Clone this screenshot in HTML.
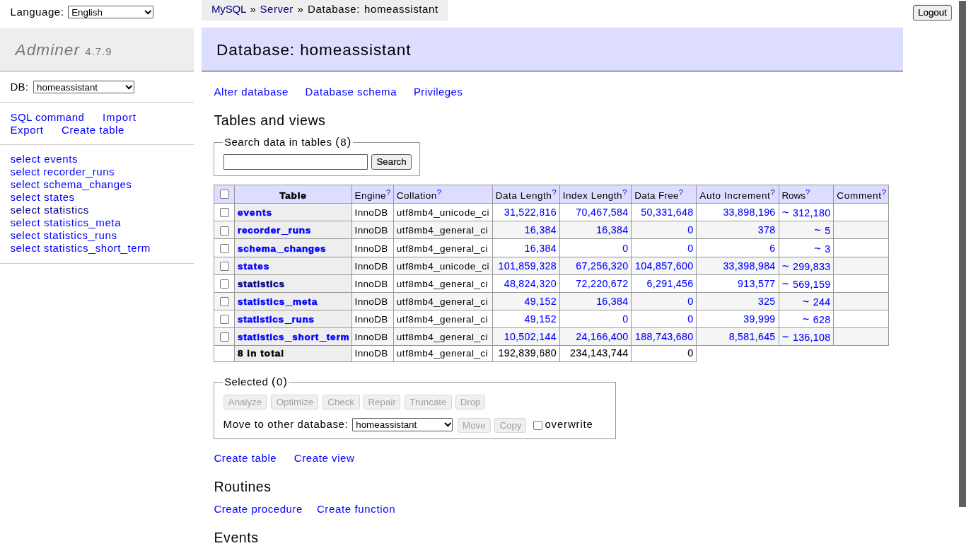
<!DOCTYPE html>
<html><head><meta charset="utf-8"><title>Adminer</title>
<style>
html,body{margin:0;padding:0;background:#fff;overflow:hidden;width:966px;height:543px;}
#wrap{position:absolute;left:0;top:0;width:1366px;height:768px;transform:scale(0.70718);transform-origin:0 0;will-change:transform;
 color:#000;font-family:"Liberation Sans",sans-serif;font-size:15px;}
.t{position:absolute;white-space:pre;}
.box{position:absolute;box-sizing:content-box;}
.hl{position:absolute;height:1px;background:#999;}
.vl{position:absolute;width:1px;background:#999;}
.cb{position:absolute;width:11px;height:11px;border:1px solid #767676;border-radius:2px;background:#fff;}
.sel{position:absolute;box-sizing:border-box;border:1px solid #5a5a5a;border-radius:1px;background:#fff;}
.sel span{position:absolute;left:4px;top:1px;font-size:13.33px;line-height:16px;color:#000;}
.sel i{position:absolute;right:3px;top:50%;width:4.6px;height:4.6px;margin-top:-4.6px;border-right:2.4px solid #000;border-bottom:2.4px solid #000;transform:rotate(45deg);}
.inp{position:absolute;box-sizing:border-box;border:1px solid #5a5a5a;border-radius:1px;background:#fff;}
.btn{position:absolute;box-sizing:border-box;border:1px solid #5a5a5a;border-radius:3px;background:#efefef;font-size:13.33px;line-height:19px;text-align:center;color:#000;-webkit-text-stroke:0.15px;}
.btn.dis{border-color:#d6d6d6;color:#a3a3a3;background:#f0f0f0;-webkit-text-stroke:0;}
#sb{position:absolute;left:959px;top:1px;width:7px;height:506px;background:#5f5f5f;}
</style></head>
<body>
<div id="wrap">
<div class="t" style="left:14.49px;top:7.48px;line-height:20px;"><span style="font-size:15.05px;letter-spacing:0.532px;word-spacing:0.000px;">Language:</span></div>
<div class="sel" style="left:96.2px;top:7.5px;width:120.9px;height:18.5px;"><span>English</span><i></i></div>
<div class="box" style="left:0;top:39.6px;width:274px;height:60.7px;background:#eee;border-bottom:1px solid #999"></div>
<div class="t" style="left:21.60px;top:55.63px;line-height:30px;"><span style="font-size:22.57px;letter-spacing:1.048px;word-spacing:0.000px;font-style:italic;color:#777;">Adminer</span><span style="font-size:22.57px;letter-spacing:0.595px;word-spacing:0.000px;letter-spacing:1.1px"> </span><span style="font-size:15.12px;letter-spacing:0.637px;word-spacing:0.000px;color:#777;letter-spacing:0.95px">4.7.9</span></div>
<div class="box" style="left:0;top:144.3px;width:274px;height:0;border-bottom:1px solid #ccc"></div>
<div class="box" style="left:0;top:203.7px;width:274px;height:0;border-bottom:1px solid #ccc"></div>
<div class="box" style="left:0;top:372px;width:274px;height:0;border-bottom:1px solid #ccc"></div>
<div class="t" style="left:14.40px;top:113.40px;line-height:20px;"><span style="font-size:15.05px;letter-spacing:0.245px;word-spacing:0.000px;">DB:</span></div>
<div class="sel" style="left:47.1px;top:113.5px;width:142.7px;height:18.9px;"><span>homeassistant</span><i></i></div>
<div class="t" style="left:14.40px;top:155.54px;line-height:20px;"><span style="font-size:15.05px;letter-spacing:0.468px;word-spacing:0.000px;color:blue;">SQL command</span></div>
<div class="t" style="left:145.00px;top:155.54px;line-height:20px;"><span style="font-size:15.05px;letter-spacing:0.858px;word-spacing:0.000px;color:blue;">Import</span></div>
<div class="t" style="left:14.40px;top:173.78px;line-height:20px;"><span style="font-size:15.05px;letter-spacing:0.608px;word-spacing:0.000px;color:blue;">Export</span></div>
<div class="t" style="left:87.10px;top:173.78px;line-height:20px;"><span style="font-size:15.05px;letter-spacing:0.577px;word-spacing:0.000px;color:blue;">Create table</span></div>
<div class="t" style="left:14.40px;top:215.49px;line-height:20px;"><span style="font-size:15.05px;letter-spacing:0.619px;word-spacing:0.000px;color:blue;">select events</span></div>
<div class="t" style="left:14.40px;top:233.49px;line-height:20px;"><span style="font-size:15.05px;letter-spacing:0.493px;word-spacing:0.000px;color:blue;">select recorder<span style="display:inline-block;transform:scaleX(1.2);transform-origin:0 0;margin-left:-0.6px;letter-spacing:1.693px">_</span>runs</span></div>
<div class="t" style="left:14.40px;top:251.49px;line-height:20px;"><span style="font-size:15.05px;letter-spacing:0.470px;word-spacing:0.000px;color:blue;">select schema<span style="display:inline-block;transform:scaleX(1.2);transform-origin:0 0;margin-left:-0.6px;letter-spacing:1.670px">_</span>changes</span></div>
<div class="t" style="left:14.40px;top:269.49px;line-height:20px;"><span style="font-size:15.05px;letter-spacing:0.593px;word-spacing:0.000px;color:blue;">select states</span></div>
<div class="t" style="left:14.40px;top:287.49px;line-height:20px;"><span style="font-size:15.05px;letter-spacing:0.610px;word-spacing:0.000px;color:navy;">select statistics</span></div>
<div class="t" style="left:14.40px;top:305.49px;line-height:20px;"><span style="font-size:15.05px;letter-spacing:0.595px;word-spacing:0.000px;color:blue;">select statistics<span style="display:inline-block;transform:scaleX(1.2);transform-origin:0 0;margin-left:-0.6px;letter-spacing:1.795px">_</span>meta</span></div>
<div class="t" style="left:14.40px;top:323.49px;line-height:20px;"><span style="font-size:15.05px;letter-spacing:0.527px;word-spacing:0.000px;color:blue;">select statistics<span style="display:inline-block;transform:scaleX(1.2);transform-origin:0 0;margin-left:-0.6px;letter-spacing:1.727px">_</span>runs</span></div>
<div class="t" style="left:14.40px;top:341.49px;line-height:20px;"><span style="font-size:15.05px;letter-spacing:0.560px;word-spacing:0.000px;color:blue;">select statistics<span style="display:inline-block;transform:scaleX(1.2);transform-origin:0 0;margin-left:-0.6px;letter-spacing:1.760px">_</span>short<span style="display:inline-block;transform:scaleX(1.2);transform-origin:0 0;margin-left:-0.6px;letter-spacing:1.760px">_</span>term</span></div>
<div class="box" style="left:284.5px;top:0;width:348.7px;height:28.6px;background:#eee"></div>
<div class="t" style="left:298.90px;top:3.38px;line-height:20px;"><span style="font-size:15.05px;letter-spacing:-0.145px;word-spacing:0.000px;color:navy;">MySQL</span><span style="font-size:15.05px;letter-spacing:0.411px;word-spacing:0.000px;word-spacing:0.6px"> » </span><span style="font-size:15.05px;letter-spacing:0.483px;word-spacing:0.000px;color:navy;">Server</span><span style="font-size:15.05px;letter-spacing:0.411px;word-spacing:0.000px;word-spacing:1.2px"> » </span><span style="font-size:15.05px;letter-spacing:0.597px;word-spacing:0.000px;word-spacing:1.2px">Database: homeassistant</span></div>
<div class="box" style="left:284.5px;top:39.2px;width:992.3px;height:60.6px;background:#ddf;border-bottom:1px solid #333"></div>
<div class="t" style="left:306.10px;top:55.77px;line-height:30px;"><span style="font-size:22.57px;letter-spacing:0.896px;word-spacing:0.000px;">Database: homeassistant</span></div>
<div class="t" style="left:302.40px;top:120.04px;line-height:20px;"><span style="font-size:15.05px;letter-spacing:0.613px;word-spacing:0.000px;color:blue;">Alter database</span></div>
<div class="t" style="left:431.59px;top:120.04px;line-height:20px;"><span style="font-size:15.05px;letter-spacing:0.550px;word-spacing:0.000px;color:blue;">Database schema</span></div>
<div class="t" style="left:584.92px;top:120.04px;line-height:20px;"><span style="font-size:15.05px;letter-spacing:0.400px;word-spacing:0.000px;color:blue;">Privileges</span></div>
<div class="t" style="left:302.40px;top:157.33px;line-height:26px;"><span style="font-size:19.56px;letter-spacing:0.573px;word-spacing:0.000px;">Tables and views</span></div>
<div class="box" style="left:301.7px;top:200.6px;width:290.3px;height:46.1px;border:1px solid #999"></div>
<div class="box" style="left:314.6px;top:195px;width:184.7px;height:12px;background:#fff"></div>
<div class="t" style="left:316.90px;top:190.75px;line-height:20px;"><span style="font-size:15.05px;letter-spacing:0.535px;word-spacing:0.000px;">Search data in tables </span><span style="font-size:16.56px;letter-spacing:0.103px;word-spacing:0.000px;letter-spacing:1.5px">(</span><span style="font-size:15.05px;letter-spacing:0.793px;word-spacing:0.000px;letter-spacing:1.2px">8</span><span style="font-size:16.56px;letter-spacing:0.103px;word-spacing:0.000px;">)</span></div>
<div class="inp" style="left:315.9px;top:218.3px;width:203.8px;height:22px"></div>
<div class="btn" style="left:525.2px;top:218.3px;width:56.8px;height:21.5px">Search</div>
<div class="box" style="left:302.20px;top:261.00px;width:954.10px;height:26.60px;background:#ddf"></div>
<div class="box" style="left:331.60px;top:287.60px;width:165.60px;height:25.14px;background:#eee"></div>
<div class="box" style="left:302.20px;top:312.74px;width:954.10px;height:25.14px;background:#f5f5f5"></div>
<div class="box" style="left:331.60px;top:312.74px;width:165.60px;height:25.14px;background:#eee"></div>
<div class="box" style="left:331.60px;top:337.88px;width:165.60px;height:25.14px;background:#eee"></div>
<div class="box" style="left:302.20px;top:363.02px;width:954.10px;height:25.14px;background:#f5f5f5"></div>
<div class="box" style="left:331.60px;top:363.02px;width:165.60px;height:25.14px;background:#eee"></div>
<div class="box" style="left:331.60px;top:388.16px;width:165.60px;height:25.14px;background:#eee"></div>
<div class="box" style="left:302.20px;top:413.30px;width:954.10px;height:25.14px;background:#f5f5f5"></div>
<div class="box" style="left:331.60px;top:413.30px;width:165.60px;height:25.14px;background:#eee"></div>
<div class="box" style="left:331.60px;top:438.44px;width:165.60px;height:25.14px;background:#eee"></div>
<div class="box" style="left:302.20px;top:463.58px;width:954.10px;height:25.14px;background:#f5f5f5"></div>
<div class="box" style="left:331.60px;top:463.58px;width:165.60px;height:25.14px;background:#eee"></div>
<div class="box" style="left:331.60px;top:488.72px;width:165.60px;height:22.28px;background:#eee"></div>
<div class="hl" style="left:301.70px;top:260.50px;width:955.10px"></div>
<div class="hl" style="left:301.70px;top:287.10px;width:955.10px"></div>
<div class="hl" style="left:301.70px;top:312.24px;width:955.10px"></div>
<div class="hl" style="left:301.70px;top:337.38px;width:955.10px"></div>
<div class="hl" style="left:301.70px;top:362.52px;width:955.10px"></div>
<div class="hl" style="left:301.70px;top:387.66px;width:955.10px"></div>
<div class="hl" style="left:301.70px;top:412.80px;width:955.10px"></div>
<div class="hl" style="left:301.70px;top:437.94px;width:955.10px"></div>
<div class="hl" style="left:301.70px;top:463.08px;width:955.10px"></div>
<div class="hl" style="left:301.70px;top:488.22px;width:955.10px"></div>
<div class="hl" style="left:301.70px;top:510.50px;width:683.70px"></div>
<div class="vl" style="left:301.70px;top:260.50px;height:251.00px"></div>
<div class="vl" style="left:331.10px;top:260.50px;height:251.00px"></div>
<div class="vl" style="left:496.70px;top:260.50px;height:251.00px"></div>
<div class="vl" style="left:555.90px;top:260.50px;height:251.00px"></div>
<div class="vl" style="left:695.80px;top:260.50px;height:251.00px"></div>
<div class="vl" style="left:790.80px;top:260.50px;height:251.00px"></div>
<div class="vl" style="left:892.40px;top:260.50px;height:251.00px"></div>
<div class="vl" style="left:984.40px;top:260.50px;height:251.00px"></div>
<div class="vl" style="left:1100.50px;top:260.50px;height:228.72px"></div>
<div class="vl" style="left:1178.40px;top:260.50px;height:228.72px"></div>
<div class="vl" style="left:1255.80px;top:260.50px;height:228.72px"></div>
<div class="cb" style="left:311.40px;top:267.80px"></div>
<div class="t" style="left:395.19px;top:267.12px;line-height:18px;"><span style="font-size:13.54px;letter-spacing:0.811px;word-spacing:0.000px;font-weight:bold;-webkit-text-stroke:0.55px;">Table</span></div>
<div class="t" style="left:501.59px;top:267.12px;line-height:18px;"><span style="font-size:13.54px;letter-spacing:0.374px;word-spacing:0.000px;">Engine</span><span style="font-size:11.24px;letter-spacing:-0.542px;word-spacing:0.000px;color:blue;position:relative;top:-5.5px;">?</span></div>
<div class="t" style="left:560.79px;top:267.12px;line-height:18px;"><span style="font-size:13.54px;letter-spacing:0.472px;word-spacing:0.000px;">Collation</span><span style="font-size:11.24px;letter-spacing:-0.542px;word-spacing:0.000px;color:blue;position:relative;top:-5.5px;">?</span></div>
<div class="t" style="left:700.69px;top:267.12px;line-height:18px;"><span style="font-size:13.54px;letter-spacing:0.543px;word-spacing:0.000px;">Data Length</span><span style="font-size:11.24px;letter-spacing:-0.542px;word-spacing:0.000px;color:blue;position:relative;top:-5.5px;">?</span></div>
<div class="t" style="left:795.69px;top:267.12px;line-height:18px;"><span style="font-size:13.54px;letter-spacing:0.515px;word-spacing:0.000px;">Index Length</span><span style="font-size:11.24px;letter-spacing:-0.542px;word-spacing:0.000px;color:blue;position:relative;top:-5.5px;">?</span></div>
<div class="t" style="left:897.29px;top:267.12px;line-height:18px;"><span style="font-size:13.54px;letter-spacing:0.261px;word-spacing:0.000px;">Data Free</span><span style="font-size:11.24px;letter-spacing:-0.542px;word-spacing:0.000px;color:blue;position:relative;top:-5.5px;">?</span></div>
<div class="t" style="left:989.29px;top:267.12px;line-height:18px;"><span style="font-size:13.54px;letter-spacing:0.603px;word-spacing:0.000px;">Auto Increment</span><span style="font-size:11.24px;letter-spacing:-0.542px;word-spacing:0.000px;color:blue;position:relative;top:-5.5px;">?</span></div>
<div class="t" style="left:1105.39px;top:267.12px;line-height:18px;"><span style="font-size:13.54px;letter-spacing:-0.040px;word-spacing:0.000px;">Rows</span><span style="font-size:11.24px;letter-spacing:-0.542px;word-spacing:0.000px;color:blue;position:relative;top:-5.5px;">?</span></div>
<div class="t" style="left:1183.29px;top:267.12px;line-height:18px;"><span style="font-size:13.54px;letter-spacing:0.685px;word-spacing:0.000px;">Comment</span><span style="font-size:11.24px;letter-spacing:-0.542px;word-spacing:0.000px;color:blue;position:relative;top:-5.5px;">?</span></div>
<div class="cb" style="left:311.40px;top:294.40px"></div>
<div class="t" style="left:335.99px;top:291.30px;line-height:18px;"><span style="font-size:13.54px;letter-spacing:1.042px;word-spacing:0.000px;font-weight:bold;-webkit-text-stroke:0.55px;color:blue;">events</span></div>
<div class="t" style="left:501.59px;top:291.30px;line-height:18px;"><span style="font-size:13.54px;letter-spacing:0.313px;word-spacing:0.000px;">InnoDB</span></div>
<div class="t" style="left:560.79px;top:291.30px;line-height:18px;"><span style="font-size:13.54px;letter-spacing:0.497px;word-spacing:0.000px;">utf8mb4<span style="display:inline-block;transform:scaleX(1.2);transform-origin:0 0;margin-left:-0.6px;letter-spacing:1.697px">_</span>unicode<span style="display:inline-block;transform:scaleX(1.2);transform-origin:0 0;margin-left:-0.6px;letter-spacing:1.697px">_</span>ci</span></div>
<div class="t" style="left:712.71px;top:291.30px;line-height:18px;"><span style="font-size:14.26px;letter-spacing:0.285px;word-spacing:0.000px;color:blue;-webkit-text-stroke:0.08px;">31,522,816</span></div>
<div class="t" style="left:814.31px;top:291.30px;line-height:18px;"><span style="font-size:14.26px;letter-spacing:0.285px;word-spacing:0.000px;color:blue;-webkit-text-stroke:0.08px;">70,467,584</span></div>
<div class="t" style="left:906.31px;top:291.30px;line-height:18px;"><span style="font-size:14.26px;letter-spacing:0.285px;word-spacing:0.000px;color:blue;-webkit-text-stroke:0.08px;">50,331,648</span></div>
<div class="t" style="left:1022.41px;top:291.30px;line-height:18px;"><span style="font-size:14.26px;letter-spacing:0.285px;word-spacing:0.000px;color:blue;-webkit-text-stroke:0.08px;">33,898,196</span></div>
<div class="t" style="left:1105.94px;top:291.30px;line-height:18px;"><span style="font-size:16.20px;letter-spacing:1.399px;word-spacing:0.000px;color:blue;-webkit-text-stroke:0.15px;">~</span><span style="font-size:13.54px;letter-spacing:0.357px;word-spacing:0.000px;"> </span><span style="font-size:14.26px;letter-spacing:0.294px;word-spacing:0.000px;color:blue;-webkit-text-stroke:0.08px;">312,180</span></div>
<div class="cb" style="left:311.40px;top:319.54px"></div>
<div class="t" style="left:335.99px;top:316.44px;line-height:18px;"><span style="font-size:13.54px;letter-spacing:0.756px;word-spacing:0.000px;font-weight:bold;-webkit-text-stroke:0.55px;color:blue;">recorder<span style="display:inline-block;transform:scaleX(1.22);transform-origin:0 0;margin-left:0.9px;letter-spacing:2.400px">_</span>runs</span></div>
<div class="t" style="left:501.59px;top:316.44px;line-height:18px;"><span style="font-size:13.54px;letter-spacing:0.313px;word-spacing:0.000px;">InnoDB</span></div>
<div class="t" style="left:560.79px;top:316.44px;line-height:18px;"><span style="font-size:13.54px;letter-spacing:0.510px;word-spacing:0.000px;">utf8mb4<span style="display:inline-block;transform:scaleX(1.2);transform-origin:0 0;margin-left:-0.6px;letter-spacing:1.710px">_</span>general<span style="display:inline-block;transform:scaleX(1.2);transform-origin:0 0;margin-left:-0.6px;letter-spacing:1.710px">_</span>ci</span></div>
<div class="t" style="left:741.56px;top:316.44px;line-height:18px;"><span style="font-size:14.26px;letter-spacing:0.291px;word-spacing:0.000px;color:blue;-webkit-text-stroke:0.08px;">16,384</span></div>
<div class="t" style="left:843.16px;top:316.44px;line-height:18px;"><span style="font-size:14.26px;letter-spacing:0.291px;word-spacing:0.000px;color:blue;-webkit-text-stroke:0.08px;">16,384</span></div>
<div class="t" style="left:972.26px;top:316.44px;line-height:18px;"><span style="font-size:14.26px;letter-spacing:0.317px;word-spacing:0.000px;color:blue;-webkit-text-stroke:0.08px;">0</span></div>
<div class="t" style="left:1071.87px;top:316.44px;line-height:18px;"><span style="font-size:14.26px;letter-spacing:0.317px;word-spacing:0.000px;color:blue;-webkit-text-stroke:0.08px;">378</span></div>
<div class="t" style="left:1151.29px;top:316.44px;line-height:18px;"><span style="font-size:16.20px;letter-spacing:1.399px;word-spacing:0.000px;color:blue;-webkit-text-stroke:0.15px;">~</span><span style="font-size:13.54px;letter-spacing:0.357px;word-spacing:0.000px;"> </span><span style="font-size:14.26px;letter-spacing:0.317px;word-spacing:0.000px;color:blue;-webkit-text-stroke:0.08px;">5</span></div>
<div class="cb" style="left:311.40px;top:344.68px"></div>
<div class="t" style="left:335.99px;top:341.58px;line-height:18px;"><span style="font-size:13.54px;letter-spacing:0.706px;word-spacing:0.000px;font-weight:bold;-webkit-text-stroke:0.55px;color:blue;">schema<span style="display:inline-block;transform:scaleX(1.22);transform-origin:0 0;margin-left:0.9px;letter-spacing:2.400px">_</span>changes</span></div>
<div class="t" style="left:501.59px;top:341.58px;line-height:18px;"><span style="font-size:13.54px;letter-spacing:0.313px;word-spacing:0.000px;">InnoDB</span></div>
<div class="t" style="left:560.79px;top:341.58px;line-height:18px;"><span style="font-size:13.54px;letter-spacing:0.510px;word-spacing:0.000px;">utf8mb4<span style="display:inline-block;transform:scaleX(1.2);transform-origin:0 0;margin-left:-0.6px;letter-spacing:1.710px">_</span>general<span style="display:inline-block;transform:scaleX(1.2);transform-origin:0 0;margin-left:-0.6px;letter-spacing:1.710px">_</span>ci</span></div>
<div class="t" style="left:741.56px;top:341.58px;line-height:18px;"><span style="font-size:14.26px;letter-spacing:0.291px;word-spacing:0.000px;color:blue;-webkit-text-stroke:0.08px;">16,384</span></div>
<div class="t" style="left:880.26px;top:341.58px;line-height:18px;"><span style="font-size:14.26px;letter-spacing:0.317px;word-spacing:0.000px;color:blue;-webkit-text-stroke:0.08px;">0</span></div>
<div class="t" style="left:972.26px;top:341.58px;line-height:18px;"><span style="font-size:14.26px;letter-spacing:0.317px;word-spacing:0.000px;color:blue;-webkit-text-stroke:0.08px;">0</span></div>
<div class="t" style="left:1088.36px;top:341.58px;line-height:18px;"><span style="font-size:14.26px;letter-spacing:0.317px;word-spacing:0.000px;color:blue;-webkit-text-stroke:0.08px;">6</span></div>
<div class="t" style="left:1151.29px;top:341.58px;line-height:18px;"><span style="font-size:16.20px;letter-spacing:1.399px;word-spacing:0.000px;color:blue;-webkit-text-stroke:0.15px;">~</span><span style="font-size:13.54px;letter-spacing:0.357px;word-spacing:0.000px;"> </span><span style="font-size:14.26px;letter-spacing:0.317px;word-spacing:0.000px;color:blue;-webkit-text-stroke:0.08px;">3</span></div>
<div class="cb" style="left:311.40px;top:369.82px"></div>
<div class="t" style="left:335.99px;top:366.72px;line-height:18px;"><span style="font-size:13.54px;letter-spacing:1.034px;word-spacing:0.000px;font-weight:bold;-webkit-text-stroke:0.55px;color:blue;">states</span></div>
<div class="t" style="left:501.59px;top:366.72px;line-height:18px;"><span style="font-size:13.54px;letter-spacing:0.313px;word-spacing:0.000px;">InnoDB</span></div>
<div class="t" style="left:560.79px;top:366.72px;line-height:18px;"><span style="font-size:13.54px;letter-spacing:0.497px;word-spacing:0.000px;">utf8mb4<span style="display:inline-block;transform:scaleX(1.2);transform-origin:0 0;margin-left:-0.6px;letter-spacing:1.697px">_</span>unicode<span style="display:inline-block;transform:scaleX(1.2);transform-origin:0 0;margin-left:-0.6px;letter-spacing:1.697px">_</span>ci</span></div>
<div class="t" style="left:704.46px;top:366.72px;line-height:18px;"><span style="font-size:14.26px;letter-spacing:0.288px;word-spacing:0.000px;color:blue;-webkit-text-stroke:0.08px;">101,859,328</span></div>
<div class="t" style="left:814.31px;top:366.72px;line-height:18px;"><span style="font-size:14.26px;letter-spacing:0.285px;word-spacing:0.000px;color:blue;-webkit-text-stroke:0.08px;">67,256,320</span></div>
<div class="t" style="left:898.06px;top:366.72px;line-height:18px;"><span style="font-size:14.26px;letter-spacing:0.288px;word-spacing:0.000px;color:blue;-webkit-text-stroke:0.08px;">104,857,600</span></div>
<div class="t" style="left:1022.41px;top:366.72px;line-height:18px;"><span style="font-size:14.26px;letter-spacing:0.285px;word-spacing:0.000px;color:blue;-webkit-text-stroke:0.08px;">33,398,984</span></div>
<div class="t" style="left:1105.94px;top:366.72px;line-height:18px;"><span style="font-size:16.20px;letter-spacing:1.399px;word-spacing:0.000px;color:blue;-webkit-text-stroke:0.15px;">~</span><span style="font-size:13.54px;letter-spacing:0.357px;word-spacing:0.000px;"> </span><span style="font-size:14.26px;letter-spacing:0.294px;word-spacing:0.000px;color:blue;-webkit-text-stroke:0.08px;">299,833</span></div>
<div class="cb" style="left:311.40px;top:394.96px"></div>
<div class="t" style="left:335.99px;top:391.86px;line-height:18px;"><span style="font-size:13.54px;letter-spacing:0.832px;word-spacing:0.000px;font-weight:bold;-webkit-text-stroke:0.55px;color:navy;">statistics</span></div>
<div class="t" style="left:501.59px;top:391.86px;line-height:18px;"><span style="font-size:13.54px;letter-spacing:0.313px;word-spacing:0.000px;">InnoDB</span></div>
<div class="t" style="left:560.79px;top:391.86px;line-height:18px;"><span style="font-size:13.54px;letter-spacing:0.510px;word-spacing:0.000px;">utf8mb4<span style="display:inline-block;transform:scaleX(1.2);transform-origin:0 0;margin-left:-0.6px;letter-spacing:1.710px">_</span>general<span style="display:inline-block;transform:scaleX(1.2);transform-origin:0 0;margin-left:-0.6px;letter-spacing:1.710px">_</span>ci</span></div>
<div class="t" style="left:712.71px;top:391.86px;line-height:18px;"><span style="font-size:14.26px;letter-spacing:0.285px;word-spacing:0.000px;color:blue;-webkit-text-stroke:0.08px;">48,824,320</span></div>
<div class="t" style="left:814.31px;top:391.86px;line-height:18px;"><span style="font-size:14.26px;letter-spacing:0.285px;word-spacing:0.000px;color:blue;-webkit-text-stroke:0.08px;">72,220,672</span></div>
<div class="t" style="left:914.55px;top:391.86px;line-height:18px;"><span style="font-size:14.26px;letter-spacing:0.282px;word-spacing:0.000px;color:blue;-webkit-text-stroke:0.08px;">6,291,456</span></div>
<div class="t" style="left:1043.02px;top:391.86px;line-height:18px;"><span style="font-size:14.26px;letter-spacing:0.294px;word-spacing:0.000px;color:blue;-webkit-text-stroke:0.08px;">913,577</span></div>
<div class="t" style="left:1105.94px;top:391.86px;line-height:18px;"><span style="font-size:16.20px;letter-spacing:1.399px;word-spacing:0.000px;color:blue;-webkit-text-stroke:0.15px;">~</span><span style="font-size:13.54px;letter-spacing:0.357px;word-spacing:0.000px;"> </span><span style="font-size:14.26px;letter-spacing:0.294px;word-spacing:0.000px;color:blue;-webkit-text-stroke:0.08px;">569,159</span></div>
<div class="cb" style="left:311.40px;top:420.10px"></div>
<div class="t" style="left:335.99px;top:417.00px;line-height:18px;"><span style="font-size:13.54px;letter-spacing:0.859px;word-spacing:0.000px;font-weight:bold;-webkit-text-stroke:0.55px;color:blue;">statistics<span style="display:inline-block;transform:scaleX(1.22);transform-origin:0 0;margin-left:0.9px;letter-spacing:2.400px">_</span>meta</span></div>
<div class="t" style="left:501.59px;top:417.00px;line-height:18px;"><span style="font-size:13.54px;letter-spacing:0.313px;word-spacing:0.000px;">InnoDB</span></div>
<div class="t" style="left:560.79px;top:417.00px;line-height:18px;"><span style="font-size:13.54px;letter-spacing:0.510px;word-spacing:0.000px;">utf8mb4<span style="display:inline-block;transform:scaleX(1.2);transform-origin:0 0;margin-left:-0.6px;letter-spacing:1.710px">_</span>general<span style="display:inline-block;transform:scaleX(1.2);transform-origin:0 0;margin-left:-0.6px;letter-spacing:1.710px">_</span>ci</span></div>
<div class="t" style="left:741.56px;top:417.00px;line-height:18px;"><span style="font-size:14.26px;letter-spacing:0.291px;word-spacing:0.000px;color:blue;-webkit-text-stroke:0.08px;">49,152</span></div>
<div class="t" style="left:843.16px;top:417.00px;line-height:18px;"><span style="font-size:14.26px;letter-spacing:0.291px;word-spacing:0.000px;color:blue;-webkit-text-stroke:0.08px;">16,384</span></div>
<div class="t" style="left:972.26px;top:417.00px;line-height:18px;"><span style="font-size:14.26px;letter-spacing:0.317px;word-spacing:0.000px;color:blue;-webkit-text-stroke:0.08px;">0</span></div>
<div class="t" style="left:1071.87px;top:417.00px;line-height:18px;"><span style="font-size:14.26px;letter-spacing:0.317px;word-spacing:0.000px;color:blue;-webkit-text-stroke:0.08px;">325</span></div>
<div class="t" style="left:1134.79px;top:417.00px;line-height:18px;"><span style="font-size:16.20px;letter-spacing:1.399px;word-spacing:0.000px;color:blue;-webkit-text-stroke:0.15px;">~</span><span style="font-size:13.54px;letter-spacing:0.357px;word-spacing:0.000px;"> </span><span style="font-size:14.26px;letter-spacing:0.317px;word-spacing:0.000px;color:blue;-webkit-text-stroke:0.08px;">244</span></div>
<div class="cb" style="left:311.40px;top:445.24px"></div>
<div class="t" style="left:335.99px;top:442.14px;line-height:18px;"><span style="font-size:13.54px;letter-spacing:0.699px;word-spacing:0.000px;font-weight:bold;-webkit-text-stroke:0.55px;color:blue;">statistics<span style="display:inline-block;transform:scaleX(1.22);transform-origin:0 0;margin-left:0.9px;letter-spacing:2.400px">_</span>runs</span></div>
<div class="t" style="left:501.59px;top:442.14px;line-height:18px;"><span style="font-size:13.54px;letter-spacing:0.313px;word-spacing:0.000px;">InnoDB</span></div>
<div class="t" style="left:560.79px;top:442.14px;line-height:18px;"><span style="font-size:13.54px;letter-spacing:0.510px;word-spacing:0.000px;">utf8mb4<span style="display:inline-block;transform:scaleX(1.2);transform-origin:0 0;margin-left:-0.6px;letter-spacing:1.710px">_</span>general<span style="display:inline-block;transform:scaleX(1.2);transform-origin:0 0;margin-left:-0.6px;letter-spacing:1.710px">_</span>ci</span></div>
<div class="t" style="left:741.56px;top:442.14px;line-height:18px;"><span style="font-size:14.26px;letter-spacing:0.291px;word-spacing:0.000px;color:blue;-webkit-text-stroke:0.08px;">49,152</span></div>
<div class="t" style="left:880.26px;top:442.14px;line-height:18px;"><span style="font-size:14.26px;letter-spacing:0.317px;word-spacing:0.000px;color:blue;-webkit-text-stroke:0.08px;">0</span></div>
<div class="t" style="left:972.26px;top:442.14px;line-height:18px;"><span style="font-size:14.26px;letter-spacing:0.317px;word-spacing:0.000px;color:blue;-webkit-text-stroke:0.08px;">0</span></div>
<div class="t" style="left:1051.26px;top:442.14px;line-height:18px;"><span style="font-size:14.26px;letter-spacing:0.291px;word-spacing:0.000px;color:blue;-webkit-text-stroke:0.08px;">39,999</span></div>
<div class="t" style="left:1134.79px;top:442.14px;line-height:18px;"><span style="font-size:16.20px;letter-spacing:1.399px;word-spacing:0.000px;color:blue;-webkit-text-stroke:0.15px;">~</span><span style="font-size:13.54px;letter-spacing:0.357px;word-spacing:0.000px;"> </span><span style="font-size:14.26px;letter-spacing:0.317px;word-spacing:0.000px;color:blue;-webkit-text-stroke:0.08px;">628</span></div>
<div class="cb" style="left:311.40px;top:470.38px"></div>
<div class="t" style="left:335.99px;top:467.28px;line-height:18px;"><span style="font-size:13.54px;letter-spacing:0.777px;word-spacing:0.000px;font-weight:bold;-webkit-text-stroke:0.55px;color:blue;">statistics<span style="display:inline-block;transform:scaleX(1.22);transform-origin:0 0;margin-left:0.9px;letter-spacing:2.400px">_</span>short<span style="display:inline-block;transform:scaleX(1.22);transform-origin:0 0;margin-left:0.9px;letter-spacing:2.400px">_</span>term</span></div>
<div class="t" style="left:501.59px;top:467.28px;line-height:18px;"><span style="font-size:13.54px;letter-spacing:0.313px;word-spacing:0.000px;">InnoDB</span></div>
<div class="t" style="left:560.79px;top:467.28px;line-height:18px;"><span style="font-size:13.54px;letter-spacing:0.510px;word-spacing:0.000px;">utf8mb4<span style="display:inline-block;transform:scaleX(1.2);transform-origin:0 0;margin-left:-0.6px;letter-spacing:1.710px">_</span>general<span style="display:inline-block;transform:scaleX(1.2);transform-origin:0 0;margin-left:-0.6px;letter-spacing:1.710px">_</span>ci</span></div>
<div class="t" style="left:712.71px;top:467.28px;line-height:18px;"><span style="font-size:14.26px;letter-spacing:0.285px;word-spacing:0.000px;color:blue;-webkit-text-stroke:0.08px;">10,502,144</span></div>
<div class="t" style="left:814.31px;top:467.28px;line-height:18px;"><span style="font-size:14.26px;letter-spacing:0.285px;word-spacing:0.000px;color:blue;-webkit-text-stroke:0.08px;">24,166,400</span></div>
<div class="t" style="left:898.06px;top:467.28px;line-height:18px;"><span style="font-size:14.26px;letter-spacing:0.288px;word-spacing:0.000px;color:blue;-webkit-text-stroke:0.08px;">188,743,680</span></div>
<div class="t" style="left:1030.65px;top:467.28px;line-height:18px;"><span style="font-size:14.26px;letter-spacing:0.282px;word-spacing:0.000px;color:blue;-webkit-text-stroke:0.08px;">8,581,645</span></div>
<div class="t" style="left:1105.94px;top:467.28px;line-height:18px;"><span style="font-size:16.20px;letter-spacing:1.399px;word-spacing:0.000px;color:blue;-webkit-text-stroke:0.15px;">~</span><span style="font-size:13.54px;letter-spacing:0.357px;word-spacing:0.000px;"> </span><span style="font-size:14.26px;letter-spacing:0.294px;word-spacing:0.000px;color:blue;-webkit-text-stroke:0.08px;">136,108</span></div>
<div class="t" style="left:335.99px;top:490.02px;line-height:18px;"><span style="font-size:13.54px;letter-spacing:1.051px;word-spacing:0.000px;font-weight:bold;-webkit-text-stroke:0.55px;">8 in total</span></div>
<div class="t" style="left:501.59px;top:490.02px;line-height:18px;"><span style="font-size:13.54px;letter-spacing:0.313px;word-spacing:0.000px;">InnoDB</span></div>
<div class="t" style="left:560.79px;top:490.02px;line-height:18px;"><span style="font-size:13.54px;letter-spacing:0.510px;word-spacing:0.000px;">utf8mb4<span style="display:inline-block;transform:scaleX(1.2);transform-origin:0 0;margin-left:-0.6px;letter-spacing:1.710px">_</span>general<span style="display:inline-block;transform:scaleX(1.2);transform-origin:0 0;margin-left:-0.6px;letter-spacing:1.710px">_</span>ci</span></div>
<div class="t" style="left:704.46px;top:490.02px;line-height:18px;"><span style="font-size:14.26px;letter-spacing:0.288px;word-spacing:0.000px;-webkit-text-stroke:0.08px;">192,839,680</span></div>
<div class="t" style="left:806.06px;top:490.02px;line-height:18px;"><span style="font-size:14.26px;letter-spacing:0.288px;word-spacing:0.000px;-webkit-text-stroke:0.08px;">234,143,744</span></div>
<div class="t" style="left:972.26px;top:490.02px;line-height:18px;"><span style="font-size:14.26px;letter-spacing:0.317px;word-spacing:0.000px;-webkit-text-stroke:0.08px;">0</span></div>
<div class="box" style="left:301.8px;top:540.1px;width:566.8px;height:78.5px;border:1px solid #999"></div>
<div class="box" style="left:314.8px;top:535px;width:92.9px;height:12px;background:#fff"></div>
<div class="t" style="left:316.90px;top:530.12px;line-height:20px;"><span style="font-size:15.05px;letter-spacing:0.473px;word-spacing:0.000px;">Selected </span><span style="font-size:16.56px;letter-spacing:0.103px;word-spacing:0.000px;letter-spacing:1.5px">(</span><span style="font-size:15.05px;letter-spacing:0.793px;word-spacing:0.000px;letter-spacing:1.2px">0</span><span style="font-size:16.56px;letter-spacing:0.103px;word-spacing:0.000px;">)</span></div>
<div class="btn dis" style="left:315.6px;top:557.6px;width:61.8px;height:21px">Analyze</div>
<div class="btn dis" style="left:383.4px;top:557.6px;width:67.1px;height:21px">Optimize</div>
<div class="btn dis" style="left:455.6px;top:557.6px;width:53.1px;height:21px">Check</div>
<div class="btn dis" style="left:513.6px;top:557.6px;width:52.9px;height:21px">Repair</div>
<div class="btn dis" style="left:572.0px;top:557.6px;width:66.6px;height:21px">Truncate</div>
<div class="btn dis" style="left:643.7px;top:557.6px;width:42.8px;height:21px">Drop</div>
<div class="t" style="left:315.60px;top:590.08px;line-height:20px;"><span style="font-size:15.05px;letter-spacing:0.630px;word-spacing:0.000px;">Move to other database:</span></div>
<div class="sel" style="left:498.3px;top:590.5px;width:142px;height:19.1px;"><span>homeassistant</span><i></i></div>
<div class="btn dis" style="left:646.8px;top:591px;width:47.1px;height:20.6px">Move</div>
<div class="btn dis" style="left:699.4px;top:591px;width:45.1px;height:20.6px">Copy</div>
<div class="cb" style="left:754.00px;top:594.90px"></div>
<div class="t" style="left:770.40px;top:590.08px;line-height:20px;"><span style="font-size:15.05px;letter-spacing:0.808px;word-spacing:0.000px;">overwrite</span></div>
<div class="t" style="left:302.40px;top:638.44px;line-height:20px;"><span style="font-size:15.05px;letter-spacing:0.577px;word-spacing:0.000px;color:blue;">Create table</span></div>
<div class="t" style="left:415.87px;top:638.44px;line-height:20px;"><span style="font-size:15.05px;letter-spacing:0.558px;word-spacing:0.000px;color:blue;">Create view</span></div>
<div class="t" style="left:302.40px;top:675.31px;line-height:26px;"><span style="font-size:19.56px;letter-spacing:0.494px;word-spacing:0.000px;">Routines</span></div>
<div class="t" style="left:302.40px;top:709.99px;line-height:20px;"><span style="font-size:15.05px;letter-spacing:0.524px;word-spacing:0.000px;color:blue;">Create procedure</span></div>
<div class="t" style="left:447.89px;top:709.99px;line-height:20px;"><span style="font-size:15.05px;letter-spacing:0.613px;word-spacing:0.000px;color:blue;">Create function</span></div>
<div class="t" style="left:302.40px;top:746.86px;line-height:26px;"><span style="font-size:19.56px;letter-spacing:0.596px;word-spacing:0.000px;">Events</span></div>
<div class="btn" style="left:1291.3px;top:7.2px;width:54.3px;height:21.8px">Logout</div>
</div>
<div id="sb"></div>
</body></html>
